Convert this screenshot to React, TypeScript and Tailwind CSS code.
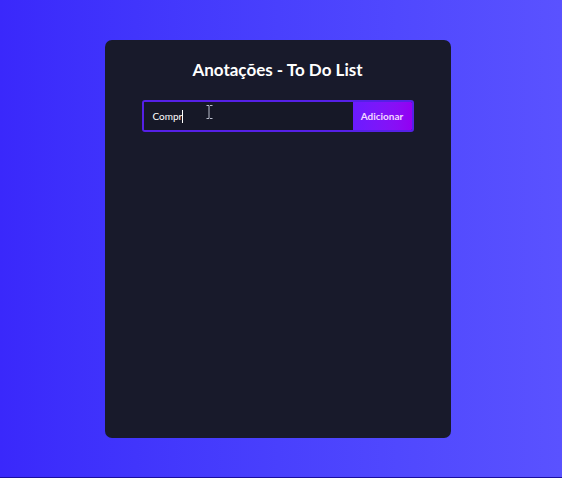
export default function App() {
  return (
    <div className="h-[478px] w-full overflow-hidden bg-gradient-to-r from-[#3a28fb] to-[#5a52ff] border-b border-[#1a10a0] font-['Lato',sans-serif]">
      <div className="flex justify-center pt-[40px] pr-[7px]">
        <div className="w-[346px] h-[398px] rounded-[7px] bg-[#181a2b] flex flex-col items-center">
          <h1 className="mt-[18px] text-[17px] font-bold text-white leading-[24px]">
            Anotações - To Do List
          </h1>
          <form className="mt-[18px] relative flex w-[272px] h-[32px] rounded-[3px] border-2 border-[#5520e6] overflow-hidden">
            <div className="flex-1 flex items-center pl-[9px] bg-[#161827]">
              <span className="text-[10px] text-white">Compr</span>
              <span className="w-px h-[13px] bg-white"></span>
            </div>
            <button
              type="button"
              className="w-[59px] bg-gradient-to-r from-[#6a1bff] to-[#9300f2] text-[10px] font-bold text-[#f3d9ff]"
            >
              Adicionar
            </button>
            <svg
              className="absolute left-[62px] top-[3px]"
              width="7"
              height="14"
              viewBox="0 0 7 14"
            >
              <path
                d="M0.5 0.5h2.5v13h-2.5M6.5 0.5h-2.5M6.5 13.5h-2.5"
                stroke="#b8bccb"
                fill="none"
              />
            </svg>
          </form>
        </div>
      </div>
    </div>
  );
}
